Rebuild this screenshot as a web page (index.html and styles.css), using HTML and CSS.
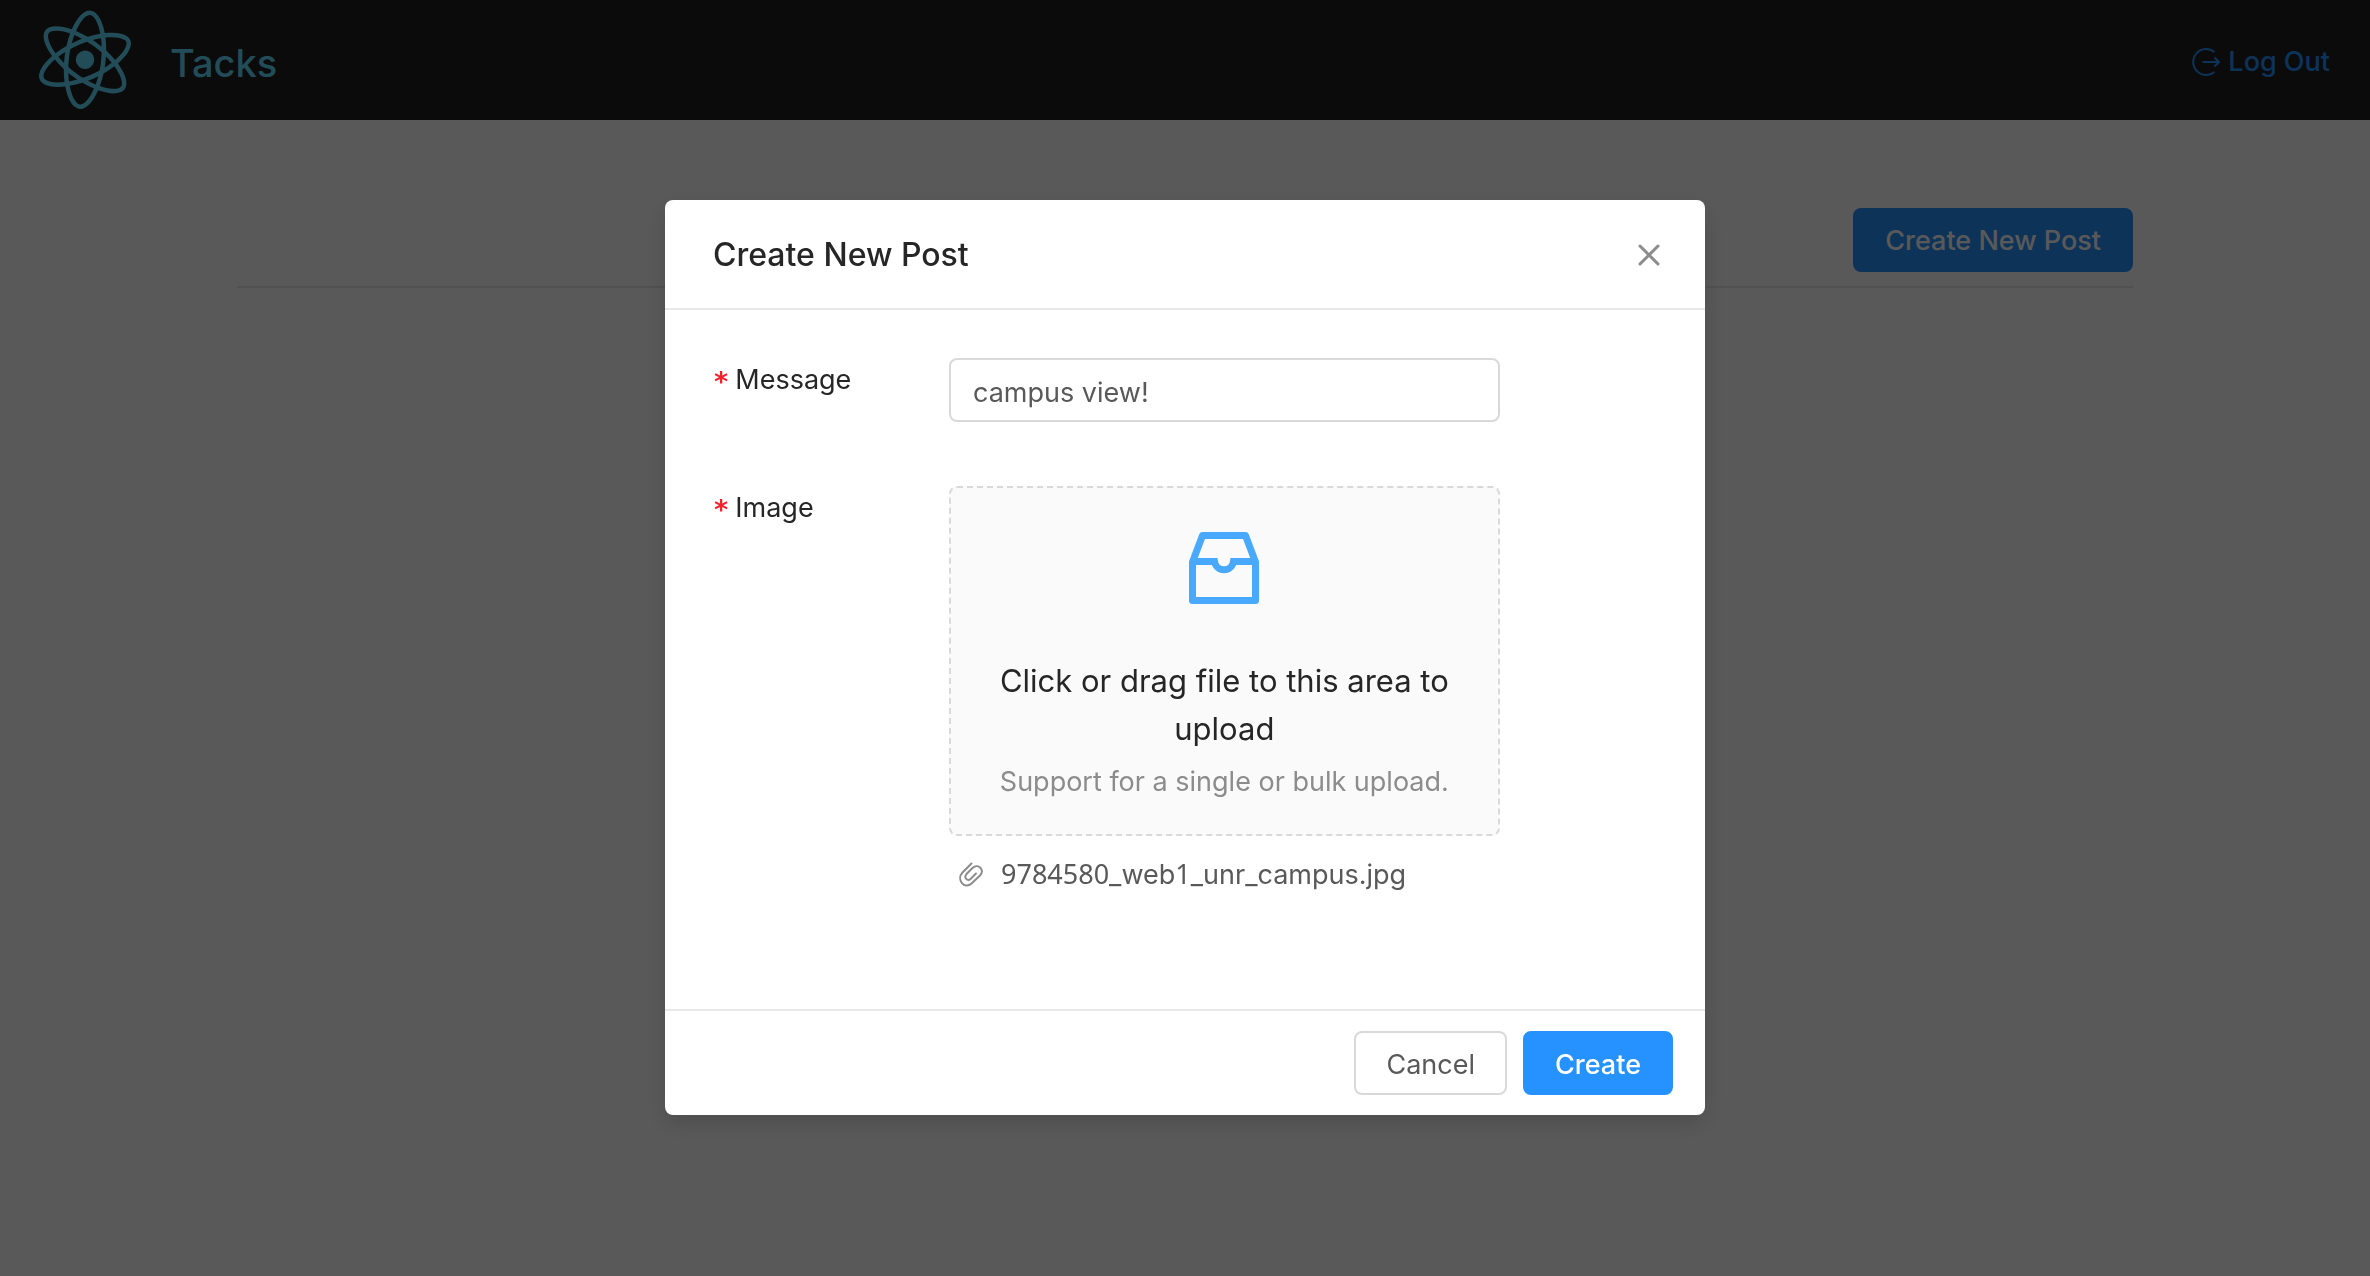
FILE: index.html
```html
<!DOCTYPE html>
<html lang="en">
<head>
<meta charset="utf-8">
<meta name="viewport" content="width=device-width, initial-scale=1">
<title>Tacks</title>
<link rel="stylesheet" href="styles.css">
</head>
<body>
<div class="app">
  <header class="header">
    <svg class="logo" viewBox="0 0 841.9 595.3" aria-hidden="true">
      <g fill="currentColor" transform="rotate(36.6 420.9 296.5)">
        <path d="M666.3 296.5c0-32.5-40.7-63.3-103.1-82.4 14.4-63.6 8-114.2-20.2-130.4-6.5-3.8-14.1-5.6-22.4-5.6v22.3c4.6 0 8.3.9 11.4 2.6 13.6 7.8 19.5 37.5 14.9 75.7-1.1 9.4-2.9 19.3-5.1 29.4-19.6-4.8-41-8.5-63.5-10.9-13.5-18.5-27.5-35.3-41.6-50 32.6-30.3 63.2-46.9 84-46.9V78c-27.5 0-63.5 19.6-99.9 53.6-36.4-33.8-72.4-53.2-99.9-53.2v22.3c20.7 0 51.4 16.5 84 46.6-14 14.7-28 31.4-41.3 49.9-22.6 2.4-44 6.1-63.6 11-2.3-10-4-19.7-5.2-29-4.7-38.2 1.1-67.9 14.6-75.8 3-1.8 6.9-2.6 11.5-2.6V78.5c-8.4 0-16 1.8-22.6 5.6-28.1 16.2-34.4 66.7-19.9 130.1-62.2 19.2-102.7 49.9-102.7 82.3 0 32.5 40.7 63.3 103.1 82.4-14.4 63.6-8 114.2 20.2 130.4 6.5 3.8 14.1 5.6 22.5 5.6 27.5 0 63.5-19.6 99.9-53.6 36.4 33.8 72.4 53.2 99.9 53.2 8.4 0 16-1.8 22.6-5.6 28.1-16.2 34.4-66.7 19.9-130.1 62-19.1 102.5-49.9 102.5-82.3zm-130.2-66.7c-3.7 12.9-8.3 26.2-13.5 39.5-4.1-8-8.4-16-13.1-24-4.6-8-9.5-15.8-14.4-23.4 14.2 2.1 27.9 4.7 41 7.9zm-45.8 106.5c-7.8 13.5-15.8 26.3-24.1 38.2-14.9 1.3-30 2-45.2 2-15.1 0-30.2-.7-45-1.9-8.3-11.9-16.4-24.6-24.2-38-7.6-13.1-14.5-26.4-20.8-39.8 6.2-13.4 13.2-26.8 20.7-39.9 7.8-13.5 15.8-26.3 24.1-38.2 14.9-1.3 30-2 45.2-2 15.1 0 30.2.7 45 1.9 8.3 11.9 16.4 24.6 24.2 38 7.6 13.1 14.5 26.4 20.8 39.8-6.3 13.4-13.2 26.8-20.7 39.9zm32.3-13c5.4 13.4 10 26.8 13.8 39.8-13.1 3.2-26.9 5.9-41.2 8 4.9-7.7 9.8-15.6 14.4-23.7 4.6-8 8.9-16.1 13-24.1zM421.2 430c-9.3-9.6-18.6-20.3-27.8-32 9 .4 18.2.7 27.5.7 9.4 0 18.7-.2 27.8-.7-9 11.7-18.3 22.4-27.5 32zm-74.4-58.9c-14.2-2.1-27.9-4.7-41-7.9 3.7-12.9 8.3-26.2 13.5-39.5 4.1 8 8.4 16 13.1 24 4.7 8 9.5 15.8 14.4 23.4zM420.7 163c9.3 9.6 18.6 20.3 27.8 32-9-.4-18.2-.7-27.5-.7-9.4 0-18.7.2-27.8.7 9-11.7 18.3-22.4 27.5-32zm-74 58.9c-4.9 7.7-9.8 15.6-14.4 23.7-4.6 8-8.9 16-13 24-5.4-13.4-10-26.8-13.8-39.8 13.1-3.1 26.9-5.8 41.2-7.9zm-90.5 125.2c-35.4-15.1-58.3-34.9-58.3-50.6 0-15.7 22.9-35.6 58.3-50.6 8.6-3.7 18-7 27.7-10.1 5.7 19.6 13.2 40 22.5 60.9-9.2 20.8-16.6 41.1-22.2 60.6-9.9-3.1-19.3-6.5-28-10.2zM310 490c-13.6-7.8-19.5-37.5-14.9-75.7 1.1-9.4 2.9-19.3 5.1-29.4 19.6 4.8 41 8.5 63.5 10.9 13.5 18.5 27.5 35.3 41.6 50-32.6 30.3-63.2 46.9-84 46.9-4.5-.1-8.3-1-11.3-2.7zm237.2-76.2c4.7 38.2-1.1 67.9-14.6 75.8-3 1.8-6.9 2.6-11.5 2.6-20.7 0-51.4-16.5-84-46.6 14-14.7 28-31.4 41.3-49.9 22.6-2.4 44-6.1 63.6-11 2.3 10.1 4.1 19.8 5.2 29.1zm38.5-66.7c-8.6 3.7-18 7-27.7 10.1-5.7-19.6-13.2-40-22.5-60.9 9.2-20.8 16.6-41.1 22.2-60.6 9.9 3.1 19.3 6.5 28.1 10.2 35.4 15.1 58.3 34.9 58.3 50.6-.1 15.7-23 35.6-58.4 50.6z"/>
        <circle cx="420.9" cy="296.5" r="45.7"/>
      </g>
    </svg>
    <h1 class="brand">Tacks</h1>
    <a class="logout" href="#">
      <svg class="logout-icon" viewBox="0 0 28 28" fill="none" stroke="currentColor" stroke-width="2" aria-hidden="true">
        <path d="M22.500 4A13 13 0 1 0 22.500 24M10.500 14H26.500M22.500 9.500L27 14L22.500 18.500"/>
      </svg>
      Log Out
    </a>
  </header>
  <main class="main">
    <div class="toolbar">
      <button class="btn btn-primary" type="button">Create New Post</button>
    </div>
  </main>
</div>

<div class="mask">
  <section class="modal" role="dialog" aria-modal="true" aria-labelledby="modal-title">
    <header class="modal-header">
      <h2 class="modal-title" id="modal-title">Create New Post</h2>
      <button class="close" type="button" aria-label="Close">
        <svg class="close-icon" viewBox="0 0 22 22" fill="none" stroke="currentColor" stroke-width="3" stroke-linecap="round" aria-hidden="true">
          <path d="M2 2L20 20M20 2L2 20"/>
        </svg>
      </button>
    </header>
    <form class="modal-body" id="post-form">
      <label class="label" for="message">Message</label>
      <input class="input" id="message" type="text" value="campus view!">
      <label class="label" for="image">Image</label>
      <div class="upload">
        <label class="dragger">
          <input class="file-input" id="image" type="file">
          <svg class="inbox-icon" viewBox="0 0 70 72" fill="none" stroke="currentColor" stroke-width="7" stroke-linejoin="round" aria-hidden="true">
            <path d="M3.500 30L13.500 3.500H56.500L66.500 30V68.500H3.500Z"/>
            <path stroke-linejoin="miter" d="M3.500 29.500H25.500A9.600 9.600 0 0 0 44.500 29.500H66.500"/>
          </svg>
          <span class="dragger-text">Click or drag file to this area to upload</span>
          <span class="dragger-hint">Support for a single or bulk upload.</span>
        </label>
        <div class="file">
          <svg class="clip-icon" viewBox="0 0 26 26" fill="none" stroke="currentColor" stroke-width="2" stroke-linecap="round" aria-hidden="true">
            <path d="M13.500 1.500L4.500 10.500C-2 17.500 6.500 28 13.500 21.500L22 13.500C27.500 8 20 1 14.500 6L8.500 12C5.500 16 9.500 19.500 12.500 17L18 11.500"/>
          </svg>
          <span class="file-name"><span class="digits">9784580</span>_web<span class="digits">1</span>_unr_campus.jpg</span>
        </div>
      </div>
    </form>
    <footer class="modal-footer">
      <button class="btn" type="button">Cancel</button>
      <button class="btn btn-primary" type="submit" form="post-form">Create</button>
    </footer>
  </section>
</div>
</body>
</html>
```

FILE: styles.css
```css
* { box-sizing: border-box; }

body {
  margin: 0;
  background: #fff;
  color: #595959;
  font: 27px/44px Inter, "Liberation Sans", sans-serif;
}

h1, h2 { margin: 0; }
svg { display: block; flex: none; }

.header {
  display: flex;
  align-items: center;
  height: 120px;
  padding-right: 40px;
  background: #222;
  color: #61dafb;
}
.logo { width: 170px; height: 120px; }
.brand { padding-top: 6px; font-size: 38px; font-weight: 500; }
.logout {
  display: flex;
  align-items: center;
  gap: 8px;
  margin-left: auto;
  padding-top: 4px;
  color: #2692ff;
  font-weight: 500;
  text-decoration: none;
}
.logout-icon { width: 28px; height: 28px; }

.main { padding: 88px 10% 0; }
.toolbar {
  display: flex;
  justify-content: flex-end;
  padding-bottom: 14px;
  border-bottom: 2px solid #e8e8e8;
}

.btn {
  height: 64px;
  padding: 2px 30px 0;
  border: 2px solid #d9d9d9;
  border-radius: 8px;
  background: #fff;
  color: #595959;
  font: inherit;
}
.btn-primary {
  border-color: #2692ff;
  background: #2692ff;
  color: #fff;
  font-weight: 500;
}

.mask {
  position: fixed;
  inset: 0;
  display: flex;
  justify-content: center;
  align-items: flex-start;
  padding: 200px 16px 48px;
  overflow: auto;
  background: rgba(0, 0, 0, .65);
}
.modal {
  width: 100%;
  max-width: 1040px;
  border-radius: 8px;
  background: #fff;
  box-shadow: 0 8px 24px rgba(0, 0, 0, .15);
}
.modal-header {
  display: flex;
  justify-content: space-between;
  align-items: center;
  padding: 33px 45px 31px 48px;
  border-bottom: 2px solid #e8e8e8;
}
.modal-title { color: #262626; font-size: 32px; font-weight: 500; }
.close { padding: 0; border: 0; background: none; color: #8c8c8c; }
.close-icon { width: 22px; height: 22px; }

.modal-body {
  display: grid;
  grid-template-columns: 6fr 14fr 4fr;
  row-gap: 64px;
  align-items: start;
  padding: 48px 48px 112px;
}
.label { grid-column: 1; color: #262626; }
.label::before {
  content: "*";
  margin-right: 6px;
  color: #f5222d;
  font-family: "DejaVu Sans Mono", monospace;
  font-weight: 700;
  line-height: 1;
  vertical-align: -2px;
}
.input {
  width: 100%;
  height: 64px;
  padding: 4px 22px 0;
  border: 2px solid #d9d9d9;
  border-radius: 8px;
  background: #fff;
  color: #595959;
  font: inherit;
}
.dragger {
  display: flex;
  flex-direction: column;
  align-items: center;
  padding: 44px 32px 30px;
  border: 2px dashed #d9d9d9;
  border-radius: 8px;
  background: #fafafa;
  text-align: center;
}
.file-input {
  position: absolute;
  width: 1px;
  height: 1px;
  opacity: 0;
}
.inbox-icon { width: 70px; height: 72px; margin-bottom: 53px; color: #49a9ff; }
.dragger-text { margin-bottom: 7px; color: #262626; font-size: 31px; line-height: 48px; }
.dragger-hint { color: #8c8c8c; }
.file {
  display: flex;
  align-items: center;
  gap: 17px;
  padding: 17px 9px 0;
}
.clip-icon { width: 26px; height: 26px; color: #8c8c8c; }
.digits { font-family: "Noto Sans", sans-serif; line-height: 1; }

.modal-footer {
  display: flex;
  justify-content: flex-end;
  gap: 16px;
  padding: 20px 32px;
  border-top: 2px solid #e8e8e8;
}
.modal-footer .btn { padding-top: 4px; }
```
